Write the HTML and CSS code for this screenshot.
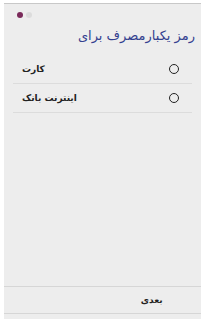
FILE: index.html
```html
<!DOCTYPE html>
<html lang="fa">
<head>
  <meta charset="UTF-8" />
  <title>رمز یکبارمصرف</title>
  <link rel="stylesheet" href="styles.css">
</head>
<body>
  <div class="screen">
    <div class="pager">
      <span class="dot on"></span>
      <span class="dot"></span>
    </div>
    <h1 class="title">رمز یکبارمصرف برای</h1>

    <div class="options">
      <div class="option">
        <span class="label">کارت</span>
        <span class="radio"></span>
      </div>
      <div class="option">
        <span class="label">اینترنت بانک</span>
        <span class="radio"></span>
      </div>
    </div>

    <div class="footer">
      <span class="half"></span>
      <button class="half next">بعدی</button>
    </div>
  </div>
</body>
</html>
```

FILE: styles.css
```css
html, body {
  height: 100%;
}

body {
  margin: 0;
  background: #fff;
  font-family: 'DejaVu Sans', 'Noto Sans', sans-serif;
}

.screen {
  box-sizing: border-box;
  height: 100%;
  margin: 0 4px;
  padding-top: 3px;
  display: flex;
  flex-direction: column;
  background: #ededed;
  border-top: 3px solid #fff;
  box-shadow: inset 0 1px 0 #c8c8c8;
}

.pager {
  display: flex;
  gap: 3px;
  padding: 6px 0 0 13px;
}

.dot {
  width: 6px;
  height: 6px;
  border-radius: 50%;
  background: #dcdcdc;
}

.dot.on {
  background: #7a2a5a;
}

.title {
  margin: 7px 6px 0 0;
  direction: rtl;
  font-size: 13px;
  line-height: 22px;
  font-weight: normal;
  color: #33408f;
}

.options {
  flex: 1;
  margin: 8px 9px 0;
}

.option {
  display: flex;
  justify-content: space-between;
  align-items: center;
  height: 28px;
  padding: 0 13px 0 9px;
  border-bottom: 1px solid #dcdcdc;
}

.label {
  font-size: 9px;
  font-weight: bold;
  color: #222;
}

.radio {
  width: 8px;
  height: 8px;
  border: 1.5px solid #222;
  border-radius: 50%;
}

.footer {
  height: 26px;
  margin-bottom: 5px;
  display: flex;
  border-top: 1px solid #d6d6d6;
  border-bottom: 1px solid #d6d6d6;
}

.half {
  flex: 1;
}

.next {
  border: none;
  background: none;
  padding: 0;
  font-family: inherit;
  font-size: 9px;
  font-weight: bold;
  color: #222;
}
```
